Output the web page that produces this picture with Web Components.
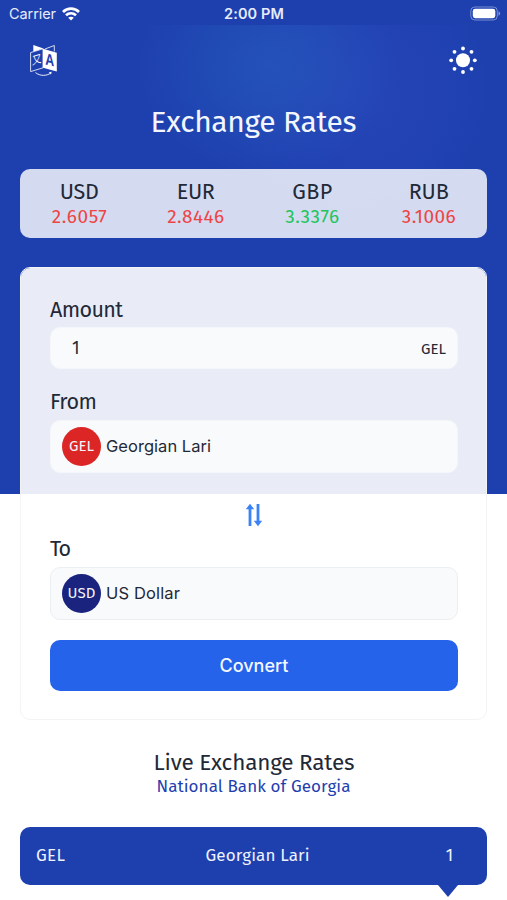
<!DOCTYPE html>
<html lang="en">
<head>
<meta charset="utf-8">
<title>Exchange Rates</title>
<style>
    body {
        margin: 0;
        background: #fff;
        font-family: "Fira Sans", "Noto Sans", sans-serif;
        font-variant-numeric: lining-nums;
        color: #1f2937;
    }
</style>
</head>
<body>
<exchange-app></exchange-app>
<script>
const define = (name, markup, Base = HTMLElement) => {
    const template = document.createElement('template');
    template.innerHTML = markup;
    customElements.define(name, class extends Base {
        constructor () {
            super();
            this.attachShadow({mode: 'open'});
            this.shadowRoot.appendChild(template.content.cloneNode(true));
        }
    });
};

// One line of text, tracked so that it fills the width given in the attribute.
class FitText extends HTMLElement {
    connectedCallback () {
        const width = parseFloat(this.getAttribute('width'));
        const length = this.textContent.length;
        if (!width || length < 2) {
            return;
        }
        const natural = this.getBoundingClientRect().width;
        const spacing = (width - natural) / (length - 1);
        this.style.letterSpacing = `${spacing.toFixed(3)}px`;
        this.style.marginRight = `${(-spacing).toFixed(3)}px`;
    }
}

define('fit-text', `
<style>
    :host {
        display: inline-block;
        white-space: nowrap;
    }
</style>
<slot></slot>
`, FitText);

define('status-bar', `
<style>
    :host {
        display: grid;
        grid-template-columns: 1fr auto 1fr;
        align-items: center;
        box-sizing: border-box;
        height: 25px;
        padding: 2px 6px 0 9px;
        font: 14.5px/20px Inter, sans-serif;
        color: #e6ecfb;
    }
    .left {
        display: flex;
        align-items: center;
        gap: 6px;
    }
    .time {
        font-weight: 600;
        margin-left: -2px;
    }
    .battery {
        justify-self: end;
    }
    svg {
        display: block;
    }
</style>
<div class="left">
    <fit-text width="47">Carrier</fit-text>
    <svg width="18" height="14" viewBox="0 0 18 14" fill="none" stroke="#fff" stroke-width="2.7">
        <path d="M1 5C5.500.6 12.500.6 17 5"/>
        <path d="M4 8.300c2.900-2.700 7.100-2.700 10 0"/>
        <path d="M9 13.600 6.200 10.800c1.600-1.400 4-1.400 5.600 0z" fill="#fff" stroke="none"/>
    </svg>
</div>
<fit-text class="time" width="60">2:00 PM</fit-text>
<svg class="battery" width="31" height="15" viewBox="0 0 31 15">
    <rect x=".8" y="1" width="26.500" height="13" rx="4" fill="none" stroke="#fff" stroke-opacity=".4"/>
    <rect x="2.800" y="2.800" width="22.500" height="9.400" rx="2.400" fill="#fff"/>
    <path d="M28.500 5.300c2.200.8 2.200 3.600 0 4.400z" fill="#fff" fill-opacity=".45"/>
</svg>
`);

define('translate-icon', `
<style>
    :host {
        display: block;
    }
    svg {
        display: block;
    }
</style>
<svg width="28" height="33" viewBox="0 0 28 33">
    <path d="M15 5l9.300-3.500v6" fill="none" stroke="#fff" stroke-width=".8"/>
    <path d="M3.300 1 13.500 4.500 3.300 7.800z" fill="#fff"/>
    <path d="M.6 8.600 13 4.800v19L.6 27.600z" fill="#1e40af" stroke="#fff" stroke-width=".8"/>
    <path d="M13 4.800 26.800 8.700v18.700L13 23.800z" fill="#fff"/>
    <text x="0" y="0" transform="matrix(1 -.3 0 1.200 2 21)" font-family="Noto Sans CJK SC, sans-serif" font-size="9.500" fill="#fff">又</text>
    <text x="0" y="0" transform="matrix(.95 .2 0 1.250 15.300 20.600)" font-family="Liberation Sans, sans-serif" font-weight="700" font-size="13" fill="#1e40af">A</text>
    <path d="M5.500 28.600c4.500 3.600 11 3.600 15.300.4" fill="none" stroke="#fff" stroke-width=".9"/>
    <path d="M18.800 28.200 21.700 27.800 21 30.400z" fill="#fff"/>
</svg>
`);

define('sun-icon', `
<style>
    :host {
        display: block;
    }
    svg {
        display: block;
    }
</style>
<svg width="28" height="28" viewBox="0 0 28 28" fill="#fff">
    <circle cx="14" cy="14.300" r="7"/>
    <circle cx="14" cy="2.500" r="1.900"/>
    <circle cx="14" cy="26" r="1.900"/>
    <circle cx="2.200" cy="14.300" r="1.900"/>
    <circle cx="25.800" cy="14.300" r="1.900"/>
    <circle cx="5.500" cy="5.800" r="1.900"/>
    <circle cx="22.500" cy="5.800" r="1.900"/>
    <circle cx="5.500" cy="22.800" r="1.900"/>
    <circle cx="22.500" cy="22.800" r="1.900"/>
</svg>
`);

define('tool-bar', `
<style>
    :host {
        display: flex;
        justify-content: space-between;
        align-items: center;
        height: 70px;
        padding: 0 30px;
    }
</style>
<translate-icon></translate-icon>
<sun-icon></sun-icon>
`);

define('rate-strip', `
<style>
    :host {
        display: grid;
        grid-template-columns: repeat(4, 1fr);
        box-sizing: border-box;
        height: 69px;
        padding: 11px 0 0 1px;
        border-radius: 10px;
        background: rgba(255, 255, 255, .81);
    }
</style>
<slot></slot>
`);

define('rate-item', `
<style>
    :host {
        display: flex;
        flex-direction: column;
        align-items: center;
        color: #ef4444;
        font-size: 19px;
        line-height: 25px;
    }
    :host([up]) {
        color: #22c55e;
    }
    .code {
        font-size: 21.5px;
        line-height: 24px;
        color: #1f2937;
    }
</style>
<div class="code"><slot name="code"></slot></div>
<slot></slot>
`);

define('form-field', `
<style>
    :host {
        display: block;
    }
    .label {
        padding-top: 2px;
        font-size: 21.5px;
        line-height: 25px;
        margin-bottom: 5px;
    }
    .box {
        display: flex;
        align-items: center;
        box-sizing: border-box;
        height: 53px;
        padding: 0 12px 1px 11px;
        border: 1px solid var(--edge, #eceff2);
        border-radius: 10px;
        background: #f9fafb;
        font: 16.5px/24px Inter, sans-serif;
    }
    :host([kind=amount]) .label {
        line-height: 24px;
    }
    :host([kind=amount]) .box {
        height: 42px;
        padding: 1px 11px 0 21px;
        justify-content: space-between;
        font: 17.5px/24px "Fira Sans", "Noto Sans", sans-serif;
        font-variant-numeric: lining-nums;
    }
</style>
<div class="label"><slot name="label"></slot></div>
<div class="box"><slot></slot></div>
`);

define('currency-badge', `
<style>
    :host {
        display: flex;
        align-items: center;
        justify-content: center;
        width: 39px;
        height: 39px;
        margin-right: 5px;
        border-radius: 50%;
        background: var(--badge, #dc2626);
        color: #f3f4f6;
        font: 15px/20px "Fira Sans", "Noto Sans", sans-serif;
    }
</style>
<slot></slot>
`);

define('swap-icon', `
<style>
    :host {
        display: flex;
        align-items: center;
        justify-content: center;
        height: 41px;
        padding-top: 21px;
    }
</style>
<svg width="18" height="24" viewBox="0 0 18 24" fill="#3b82f6">
    <path d="M3.600 23V6.300H.8L5 .8 9.200 6.300H6.400V23zM11.600 1v16.700H8.800L13 23.200 17.200 17.700H14.400V1z"/>
</svg>
`);

define('primary-button', `
<style>
    :host {
        display: flex;
        align-items: center;
        justify-content: center;
        height: 51px;
        margin-top: 20px;
        border-radius: 10px;
        background: #2563eb;
        color: #f3f7ff;
        font: 500 18px/24px Inter, sans-serif;
    }
</style>
<slot></slot>
`);

define('converter-card', `
<style>
    :host {
        display: block;
        box-sizing: border-box;
        height: 453px;
        margin-top: 29px;
        padding: 28px 28px 0 29px;
        border: 1px solid #f3f4f6;
        border-radius: 10px;
        background: rgba(255, 255, 255, .9);
        background-clip: padding-box;
    }
    .upper {
        --edge: #f4f6fa;
    }
    .from {
        margin-top: 19px;
    }
    .unit {
        font-size: 15px;
    }
</style>
<form-field class="upper" kind="amount">
    <fit-text slot="label" width="73">Amount</fit-text>
    <span>1</span>
    <fit-text class="unit" width="25">GEL</fit-text>
</form-field>
<form-field class="upper from">
    <fit-text slot="label" width="47">From</fit-text>
    <currency-badge><fit-text width="25">GEL</fit-text></currency-badge>
    <fit-text width="105">Georgian Lari</fit-text>
</form-field>
<swap-icon></swap-icon>
<form-field>
    <fit-text slot="label" width="21">To</fit-text>
    <currency-badge style="--badge: #1a237e"><fit-text width="28">USD</fit-text></currency-badge>
    <fit-text width="74">US Dollar</fit-text>
</form-field>
<primary-button><fit-text width="69">Covnert</fit-text></primary-button>
`);

define('live-rates', `
<style>
    :host {
        display: flex;
        flex-direction: column;
        align-items: center;
        margin-top: 29px;
    }
    .title {
        margin-left: 1px;
        font-size: 22.5px;
        line-height: 28px;
    }
    .source {
        font-size: 17px;
        line-height: 20px;
        color: #1e40af;
    }
    .row {
        position: relative;
        display: grid;
        grid-template-columns: 1fr auto 1fr;
        align-items: center;
        box-sizing: border-box;
        width: 100%;
        height: 58px;
        margin-top: 30px;
        padding: 0 34px 1px 16px;
        border-radius: 10px;
        background: #1e40af;
        color: #eef2ff;
        font-size: 17px;
    }
    .name {
        margin-left: 26px;
    }
    .value {
        justify-self: end;
    }
    .row::after {
        content: '';
        position: absolute;
        top: 100%;
        right: 29px;
        width: 20px;
        height: 12px;
        background: #1e40af;
        clip-path: polygon(0 0, 100% 0, 50% 100%);
    }
</style>
<fit-text class="title" width="201">Live Exchange Rates</fit-text>
<fit-text class="source" width="194">National Bank of Georgia</fit-text>
<div class="row">
    <span><fit-text width="29">GEL</fit-text></span>
    <span class="name"><fit-text width="104">Georgian Lari</fit-text></span>
    <span class="value">1</span>
</div>
`);

define('exchange-app', `
<style>
    :host {
        display: block;
        height: 900px;
        overflow: hidden;
        background:
            linear-gradient(#1e40af, #1e40af) 0 0 / 100% 25px no-repeat,
            radial-gradient(130px 110px at 268px 65px, rgba(38, 98, 192, .5), rgba(38, 98, 192, .28) 50%, transparent) 0 0 / 100% 169px no-repeat,
            radial-gradient(140px 135px at 350px 90px, rgba(48, 74, 194, .42), rgba(48, 74, 194, .25) 50%, transparent) 0 0 / 100% 250px no-repeat,
            linear-gradient(#1e40af, #1e40af) 0 0 / 100% 494px no-repeat,
            #fff;
    }
    .title {
        display: flex;
        justify-content: center;
        height: 40px;
        margin: 7px 0 27px;
        font-size: 30px;
        line-height: 40px;
        color: #f3f6ff;
    }
    main {
        padding: 0 20px;
    }
</style>
<status-bar></status-bar>
<tool-bar></tool-bar>
<div class="title"><fit-text width="206">Exchange Rates</fit-text></div>
<main>
    <rate-strip>
        <rate-item><fit-text slot="code" width="39">USD</fit-text><fit-text width="55">2.6057</fit-text></rate-item>
        <rate-item><fit-text slot="code" width="38">EUR</fit-text><fit-text width="57">2.8446</fit-text></rate-item>
        <rate-item up><fit-text slot="code" width="40">GBP</fit-text><fit-text width="54">3.3376</fit-text></rate-item>
        <rate-item><fit-text slot="code" width="40">RUB</fit-text><fit-text width="54">3.1006</fit-text></rate-item>
    </rate-strip>
    <converter-card></converter-card>
    <live-rates></live-rates>
</main>
`);
</script>
</body>
</html>
